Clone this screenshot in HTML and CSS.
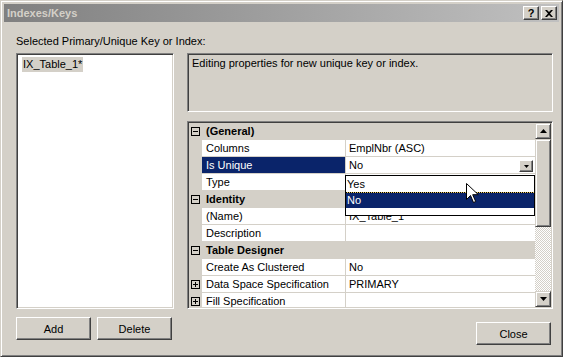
FILE: index.html
```html
<!DOCTYPE html>
<html>
<head>
<meta charset="utf-8">
<link rel="stylesheet" href="styles.css">
</head>
<body>
<div class="window">
  <div class="titlebar">
    <span class="title">Indexes/Keys</span>
    <span class="tbtn help">?</span>
    <span class="tbtn close-x"><svg width="8" height="7" viewBox="0 0 8 7"><path d="M0 0h2l2 2 2-2h2L5 3.5 8 7H6L4 5 2 7H0l3-3.5z" fill="#000"/></svg></span>
  </div>
  <div class="content">
    <div class="label">Selected Primary/Unique Key or Index:</div>
    <div class="listbox"><span class="item">IX_Table_1*</span></div>
    <div class="right">
      <div class="desc">Editing properties for new unique key or index.</div>
      <div class="pgrid">
        <div class="rows">
          <div class="row cat"><span class="strip"><span class="tog minus"></span></span><span class="catname">(General)</span></div>
          <div class="row"><span class="strip"></span><span class="name">Columns</span><span class="value">EmplNbr (ASC)</span></div>
          <div class="row active"><span class="strip"></span><span class="name">Is Unique</span><span class="value">No<span class="ddbtn"><svg width="5" height="3" viewBox="0 0 5 3"><path d="M0 0h5L2.5 3z" fill="#000"/></svg></span></span></div>
          <div class="row"><span class="strip"></span><span class="name">Type</span><span class="value"></span></div>
          <div class="row cat"><span class="strip"><span class="tog minus"></span></span><span class="catname">Identity</span></div>
          <div class="row"><span class="strip"></span><span class="name">(Name)</span><span class="value">IX_Table_1</span></div>
          <div class="row"><span class="strip"></span><span class="name">Description</span><span class="value"></span></div>
          <div class="row cat"><span class="strip"><span class="tog minus"></span></span><span class="catname">Table Designer</span></div>
          <div class="row"><span class="strip"></span><span class="name">Create As Clustered</span><span class="value">No</span></div>
          <div class="row"><span class="strip"><span class="tog plus"></span></span><span class="name">Data Space Specification</span><span class="value">PRIMARY</span></div>
          <div class="row"><span class="strip"><span class="tog plus"></span></span><span class="name">Fill Specification</span><span class="value"></span></div>
        </div>
        <div class="scroll">
          <div class="sbtn"><svg width="7" height="4" viewBox="0 0 7 4"><path d="M0 4h7L3.5 0z" fill="#000"/></svg></div>
          <div class="thumb"></div>
          <div class="track"></div>
          <div class="sbtn"><svg width="7" height="4" viewBox="0 0 7 4"><path d="M0 0h7L3.5 4z" fill="#000"/></svg></div>
        </div>
        <div class="dd">
          <div class="opt">Yes</div>
          <div class="opt sel">No</div>
        </div>
        <svg class="cursor" width="13" height="21" viewBox="0 0 13 21"><path d="M0.5 0.5v16l4-4 3 7 2.2-1-3-6.8h5.6z" fill="#fff" stroke="#000" stroke-width="1"/></svg>
      </div>
    </div>
    <div class="btns-left">
      <button class="btn">Add</button>
      <button class="btn">Delete</button>
    </div>
    <div class="btns-right">
      <button class="btn">Close</button>
    </div>
  </div>
</div>
</body>
</html>
```

FILE: styles.css
```css
* { box-sizing: border-box; }
body {
  margin: 0;
  background: #fff;
  font-family: "Liberation Sans", Arial, sans-serif;
  font-size: 11px;
  color: #000;
}
.window {
  width: 563px;
  height: 357px;
  background: #d4d0c8;
  border: 1px solid;
  border-color: #d4d0c8 #404040 #404040 #d4d0c8;
  box-shadow: inset 1px 1px #fff, inset -1px -1px #808080;
  padding: 3px;
  display: flex;
  flex-direction: column;
}
.titlebar {
  height: 18px;
  display: flex;
  align-items: center;
  padding: 0 2px 0 3px;
  background: linear-gradient(to right, #808080, #c0c0c0);
}
.title {
  flex: 1;
  font-weight: bold;
  color: #d4d0c8;
  font-size: 11px;
}
.tbtn {
  width: 16px;
  height: 14px;
  background: #d4d0c8;
  border: 1px solid;
  border-color: #fff #404040 #404040 #fff;
  box-shadow: inset -1px -1px #808080;
  display: flex;
  align-items: center;
  justify-content: center;
  font-weight: bold;
  font-size: 11px;
  line-height: 12px;
}
.tbtn + .tbtn { margin-left: 2px; }
.content {
  flex: 1;
  display: grid;
  grid-template-columns: 158px 366px;
  grid-template-rows: 18px 256px auto;
  column-gap: 13px;
  padding: 13px 0 0 12px;
}
.label {
  grid-column: 1 / 3;
  line-height: 13px;
}
.listbox {
  background: #fff;
  border: 1px solid;
  border-color: #808080 #fff #fff #808080;
  box-shadow: inset 1px 1px #404040, inset -1px -1px #d4d0c8;
  padding: 3px 0 0 5px;
}
.item {
  display: inline-block;
  background: #d4d0c8;
  padding: 0 1px;
  line-height: 15px;
}
.right {
  display: flex;
  flex-direction: column;
  gap: 9px;
}
.desc {
  height: 59px;
  background: #d4d0c8;
  border: 1px solid;
  border-color: #808080 #fff #fff #808080;
  box-shadow: inset 1px 1px #404040, inset -1px -1px #d4d0c8;
  padding: 3px 4px;
  line-height: 13px;
}
.pgrid {
  height: 188px;
  position: relative;
  border: 1px solid;
  border-color: #808080 #fff #fff #808080;
  box-shadow: inset 1px 1px #404040, inset -1px -1px #d4d0c8;
  padding: 1px;
  display: flex;
}
.rows {
  flex: 1;
  overflow: hidden;
  background: #fff;
}
.row {
  display: flex;
  height: 17px;
}
.strip {
  width: 13px;
  flex: 0 0 13px;
  background: #d4d0c8;
  display: flex;
  align-items: center;
  justify-content: center;
}
.name {
  width: 144px;
  flex: 0 0 144px;
  border-right: 1px solid #d4d0c8;
  border-bottom: 1px solid #d4d0c8;
  padding-left: 4px;
  line-height: 16px;
  white-space: nowrap;
}
.value {
  flex: 1;
  border-bottom: 1px solid #d4d0c8;
  padding-left: 3px;
  line-height: 16px;
  position: relative;
  white-space: nowrap;
}
.row.active .name {
  background: #0a246a;
  color: #fff;
}
.row.cat {
  background: #d4d0c8;
}
.catname {
  padding-left: 4px;
  line-height: 16px;
  font-weight: bold;
}
.tog {
  width: 9px;
  height: 9px;
  border: 1px solid #000;
  position: relative;
}
.tog::before {
  content: "";
  position: absolute;
  left: 1px;
  top: 3px;
  width: 5px;
  height: 1px;
  background: #000;
}
.tog.plus::after {
  content: "";
  position: absolute;
  left: 3px;
  top: 1px;
  width: 1px;
  height: 5px;
  background: #000;
}
.ddbtn {
  position: absolute;
  right: 2px;
  top: 3px;
  width: 14px;
  height: 12px;
  background: #d4d0c8;
  border: 1px solid;
  border-color: #fff #404040 #404040 #fff;
  box-shadow: inset -1px -1px #808080;
  display: flex;
  align-items: center;
  justify-content: center;
}
.scroll {
  width: 16px;
  flex: 0 0 16px;
  display: flex;
  flex-direction: column;
  background: repeating-conic-gradient(#fff 0 25%, #d4d0c8 0 50%) 0 0 / 2px 2px;
}
.sbtn, .thumb {
  background: #d4d0c8;
  border: 1px solid;
  border-color: #d4d0c8 #404040 #404040 #d4d0c8;
  box-shadow: inset 1px 1px #fff, inset -1px -1px #808080;
}
.sbtn {
  height: 16px;
  display: flex;
  align-items: center;
  justify-content: center;
}
.thumb { height: 88px; }
.track { flex: 1; }
.dd {
  position: absolute;
  left: 157px;
  top: 53px;
  width: 190px;
  height: 41px;
  background: #fff;
  border: 1px solid #000;
}
.opt {
  line-height: 16px;
  height: 16px;
  padding-left: 1px;
}
.opt.sel {
  background: #0a246a;
  color: #fff;
  position: relative;
}
.opt.sel::before {
  content: "";
  position: absolute;
  left: 0;
  right: 0;
  top: 0;
  height: 1px;
  background: repeating-linear-gradient(90deg, #000 0 1px, #e8c860 1px 2px);
}
.cursor {
  position: absolute;
  left: 278px;
  top: 61px;
}
.btns-left {
  display: flex;
  gap: 6px;
  padding-top: 8px;
}
.btns-right {
  display: flex;
  justify-content: flex-end;
  padding-top: 13px;
  padding-right: 2px;
}
.btn {
  width: 75px;
  height: 23px;
  padding: 0;
  background: #d4d0c8;
  border: 1px solid;
  border-color: #fff #404040 #404040 #fff;
  box-shadow: inset -1px -1px #808080;
  font-family: inherit;
  font-size: 11px;
  color: #000;
  text-align: center;
}
```
